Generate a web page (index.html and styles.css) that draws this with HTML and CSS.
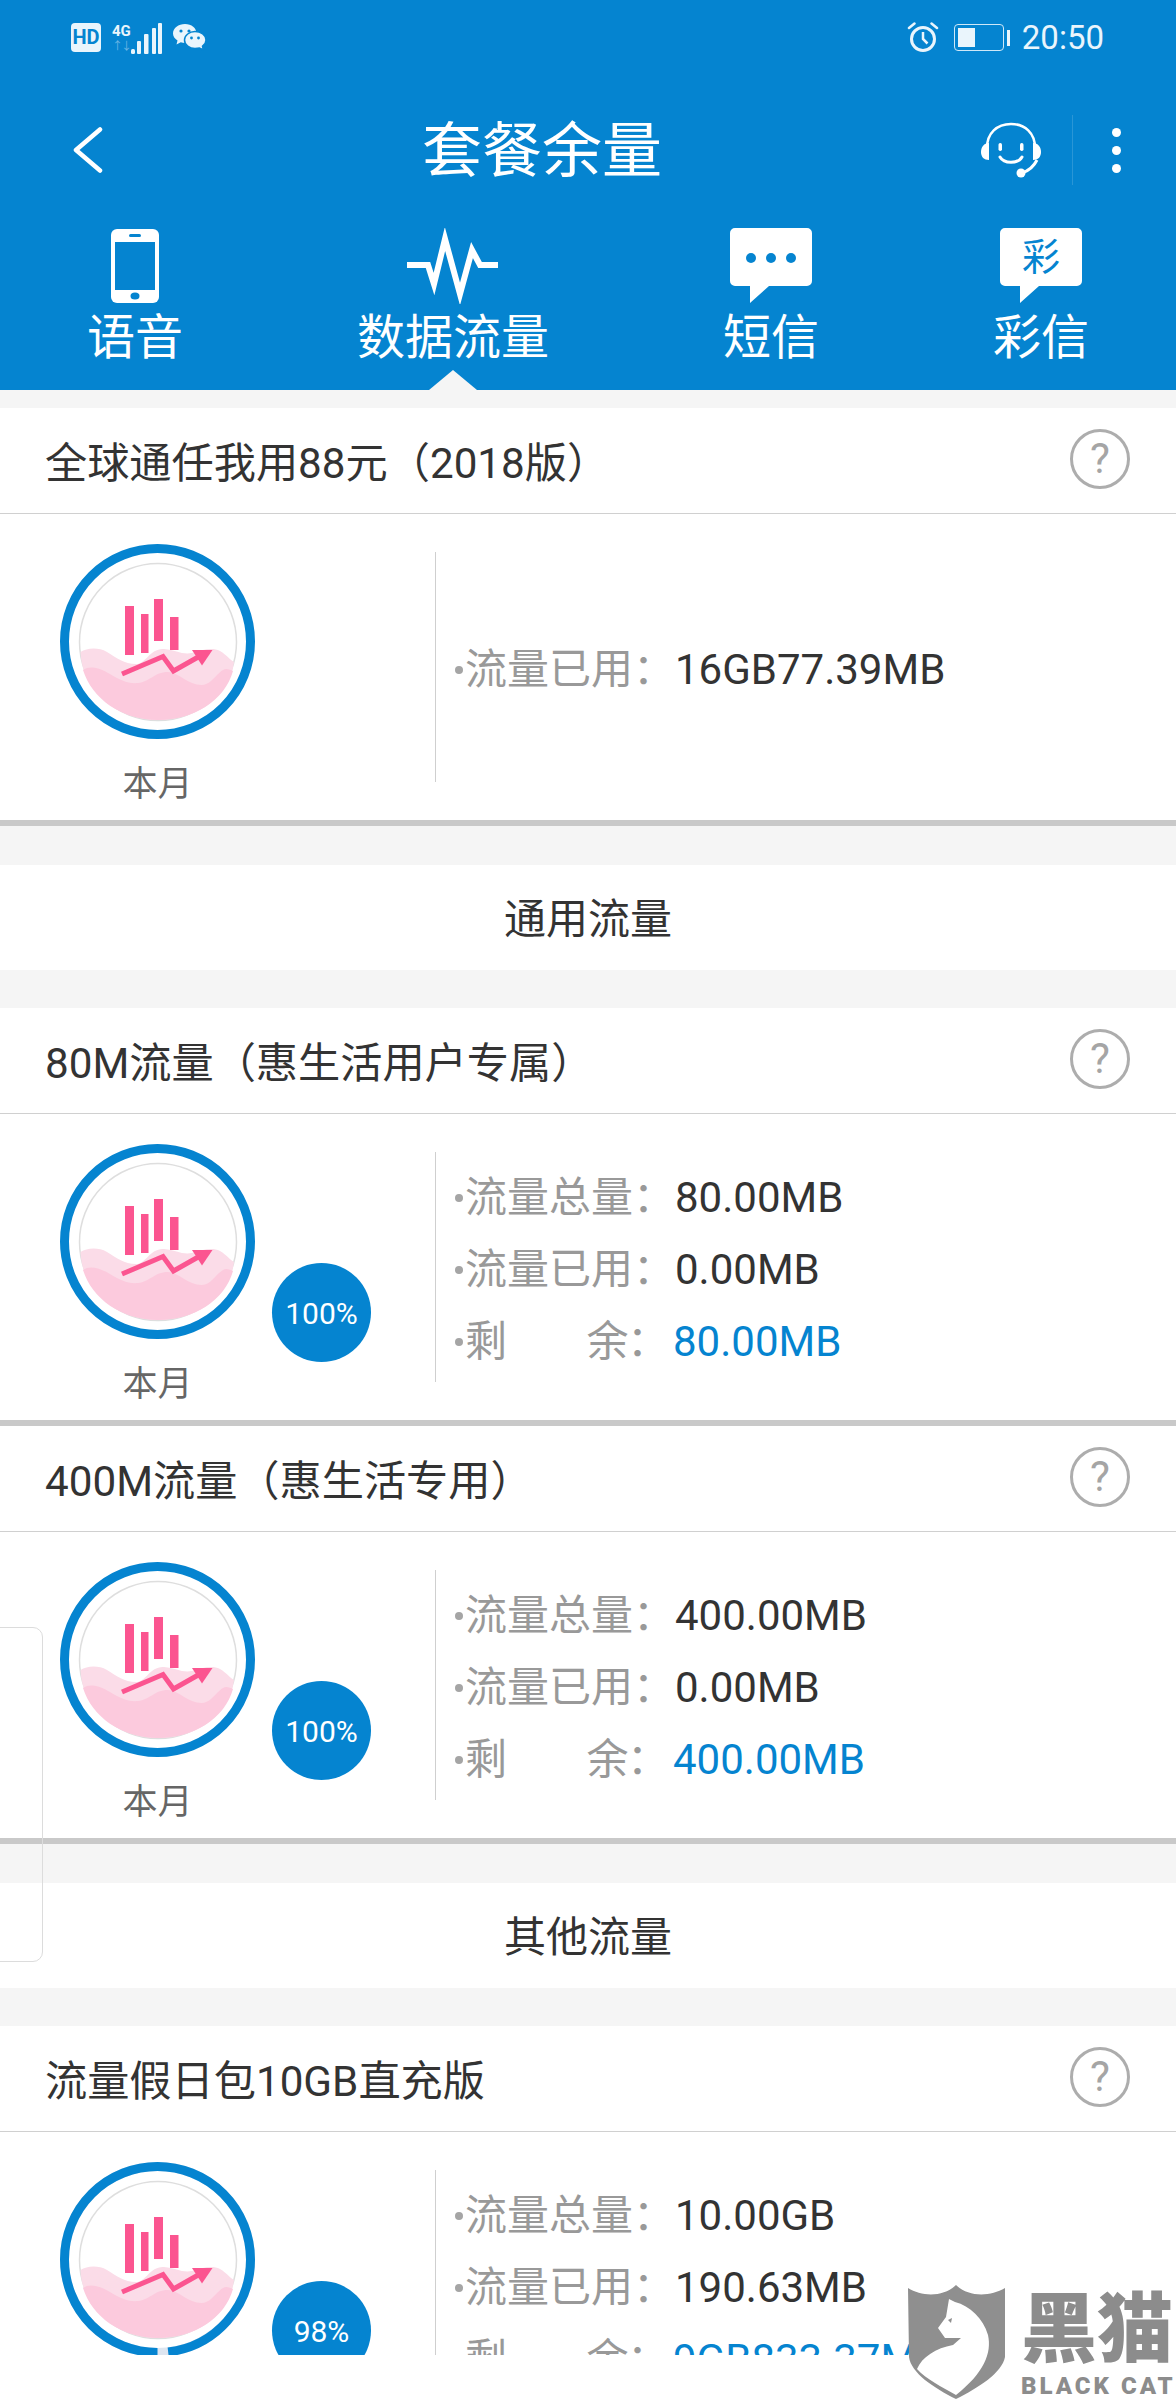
FILE: index.html
```html
<!DOCTYPE html>
<html lang="zh-CN">
<head>
    <meta charset="UTF-8">
    <meta name="viewport" content="width=device-width, initial-scale=1.0">
    <title>套餐余量</title>
    <link rel="stylesheet" href="styles.css">
</head>
<body>
    <!-- Shared gauge picture -->
    <svg class="defs" width="0" height="0">
        <symbol id="gaugeArt" viewBox="0 0 195 195">
            <circle cx="98" cy="98" r="78.5" fill="#fff" stroke="#dedede" stroke-width="1.5"/>
            <path d="M20.5 108C27 104 38 103 47 108C57 114 64 120 76 120C86 120 90 104 104 105C116 106 122 111 132 109C142 106 152 103 160 107C167 111 170 116 174 118C170 152 138 176 98 176C58 176 22 148 20.5 108Z" fill="#fbdce8"/>
            <path d="M23 126C30 121 40 124 50 130C60 136 68 140 78 139C90 138 94 128 108 128C118 128 128 141 142 141C152 141 158 126 166 125C169 125 171 126 173 127C165 156 134 176 98 176C62 176 32 155 23 126Z" fill="#fccadd"/>
            <rect x="65" y="62" width="9" height="49" fill="#fb5590"/>
            <rect x="81" y="70" width="7.5" height="39" fill="#fb5590"/>
            <rect x="94" y="55" width="9" height="42" fill="#fb5590"/>
            <rect x="110" y="73" width="8.5" height="33" fill="#fb5590"/>
            <path d="M62 130L103 112.500L113.500 127L140 112" fill="none" stroke="#fb5590" stroke-width="5"/>
            <path d="M132 106H152.500L142 121.500Z" fill="#fb5590"/>
        </symbol>
    </svg>

    <header class="top">
        <div class="status">
            <div class="status-left">
                <span class="hd">HD</span>
                <span class="net">
                    <span class="net-g">4G</span>
                    <span class="net-arrows">↑↓</span>
                </span>
                <svg class="signal" width="32" height="32" viewBox="0 0 32 32">
                    <g fill="#eaf5fc">
                        <rect x="0" y="26" width="4" height="5" rx="1.500"/>
                        <rect x="6" y="18" width="4" height="13" rx="1"/>
                        <rect x="13" y="11" width="4.500" height="20" rx="1"/>
                        <rect x="21" y="5" width="4" height="26" rx="1"/>
                        <rect x="27" y="0" width="4" height="31" rx="1"/>
                    </g>
                </svg>
                <svg class="wechat" width="33" height="27" viewBox="0 0 33 27">
                    <path d="M12 0C18.500 0 23.500 4 23.500 9.500C23.500 15 18.500 19 12 19C10.500 19 9 18.800 7.800 18.300L3.500 20.500L4.500 16.500C1.800 14.800 0 12.300 0 9.500C0 4 5.500 0 12 0Z" fill="#eaf5fc"/>
                    <circle cx="8" cy="7" r="1.600" fill="#0584d0"/>
                    <circle cx="16" cy="7" r="1.600" fill="#0584d0"/>
                    <path d="M22 7.500C28 7.500 33 11.300 33 16C33 18.500 31.500 20.800 29.500 22.200L30.500 26L26.500 24C25.300 24.300 23.800 24.500 22 24.500C16.500 24.500 11.500 21 11.500 16C11.500 11.300 16.500 7.500 22 7.500Z" fill="#eaf5fc" stroke="#0584d0" stroke-width="1.500"/>
                    <circle cx="18.500" cy="14" r="1.400" fill="#0584d0"/>
                    <circle cx="25.500" cy="14" r="1.400" fill="#0584d0"/>
                </svg>
            </div>
            <div class="status-right">
                <svg class="alarm" width="32" height="31" viewBox="0 0 32 31">
                    <circle cx="16" cy="17" r="11.500" fill="none" stroke="#eaf5fc" stroke-width="3"/>
                    <path d="M16 10V17L20.500 21.500" fill="none" stroke="#eaf5fc" stroke-width="2.500"/>
                    <path d="M2 6L7.500 1.500M30 6L24.500 1.500" stroke="#eaf5fc" stroke-width="2.500" stroke-linecap="round"/>
                </svg>
                <span class="battery"><span class="battery-fill"></span></span>
                <span class="battery-nub"></span>
                <span class="clock">20:50</span>
            </div>
        </div>

        <nav class="navbar">
            <svg class="back" width="30" height="46" viewBox="0 0 30 46">
                <path d="M27 2.500L3 23L27 43.500" fill="none" stroke="#fff" stroke-width="4.500" stroke-linecap="round" stroke-linejoin="round"/>
            </svg>
            <h1 class="page-title">套餐余量</h1>
            <div class="nav-actions">
                <svg class="headset" width="62" height="56" viewBox="0 0 62 56">
                    <path d="M7 26C7 11 17 2 31 2C45 2 55 11 55 26" fill="none" stroke="#fff" stroke-width="2.500"/>
                    <path d="M9 21C4 21 1 25 1 30C1 35 4 38 9 38Z" fill="#fff"/>
                    <path d="M53 21C58 21 61 25 61 30C61 35 58 38 53 38Z" fill="#fff"/>
                    <path d="M57 38C54 44 48 49 42 51" fill="none" stroke="#fff" stroke-width="3"/>
                    <circle cx="41" cy="51" r="4.500" fill="#fff"/>
                    <rect x="18.500" y="21" width="3.500" height="8" rx="1.700" fill="#fff"/>
                    <rect x="40" y="21" width="3.500" height="8" rx="1.700" fill="#fff"/>
                    <path d="M20 35C24 42 38 42 42 35" fill="none" stroke="#fff" stroke-width="3" stroke-linecap="round"/>
                </svg>
                <span class="nav-sep"></span>
                <span class="more"><i></i><i></i><i></i></span>
            </div>
        </nav>

        <div class="tabs">
            <div class="tab">
                <svg width="48" height="74" viewBox="0 0 48 74">
                    <rect x="0" y="0" width="48" height="74" rx="6" fill="#fff"/>
                    <rect x="4" y="13" width="40" height="48" fill="#0584d0"/>
                    <rect x="18" y="5" width="12" height="3" rx="1.500" fill="#0584d0"/>
                    <ellipse cx="24" cy="67" rx="4.500" ry="3.500" fill="#0584d0"/>
                </svg>
                <span>语音</span>
            </div>
            <div class="tab tab-active">
                <svg width="92" height="76" viewBox="0 0 92 76">
                    <path d="M0 37H21L27 56L38 11L53 66L65 22L73 37H91" fill="none" stroke="#fff" stroke-width="6" stroke-miterlimit="8"/>
                </svg>
                <span>数据流量</span>
            </div>
            <div class="tab">
                <svg width="82" height="76" viewBox="0 0 82 76">
                    <path d="M5 0H77A5 5 0 0 1 82 5V53A5 5 0 0 1 77 58H39L20 75V58H5A5 5 0 0 1 0 53V5A5 5 0 0 1 5 0Z" fill="#fff"/>
                    <circle cx="21" cy="30" r="5" fill="#0584d0"/>
                    <circle cx="41" cy="30" r="5" fill="#0584d0"/>
                    <circle cx="61" cy="30" r="5" fill="#0584d0"/>
                </svg>
                <span>短信</span>
            </div>
            <div class="tab">
                <span class="bubble">
                    <svg width="82" height="76" viewBox="0 0 82 76">
                        <path d="M5 0H77A5 5 0 0 1 82 5V53A5 5 0 0 1 77 58H39L20 75V58H5A5 5 0 0 1 0 53V5A5 5 0 0 1 5 0Z" fill="#fff"/>
                    </svg>
                    <b class="bubble-text">彩</b>
                </span>
                <span>彩信</span>
            </div>
        </div>
    </header>

    <main class="content">
        <section class="card">
            <div class="card-title">
                <h2>全球通任我用88元（2018版）</h2>
                <span class="help">?</span>
            </div>
            <div class="card-body">
                <div class="gauge">
                    <svg width="195" height="195" viewBox="0 0 195 195">
                        <circle class="ring" cx="97.500" cy="97.500" r="93"/>
                        <use href="#gaugeArt"/>
                    </svg>
                    <p class="gauge-label">本月</p>
                </div>
                <ul class="info">
                    <li><span class="key">流量已用：</span><span class="val">16GB77.39MB</span></li>
                </ul>
            </div>
        </section>

        <div class="section-head">通用流量</div>

        <section class="card">
            <div class="card-title">
                <h2>80M流量（惠生活用户专属）</h2>
                <span class="help">?</span>
            </div>
            <div class="card-body">
                <div class="gauge">
                    <svg width="195" height="195" viewBox="0 0 195 195">
                        <circle class="ring" cx="97.500" cy="97.500" r="93"/>
                        <use href="#gaugeArt"/>
                    </svg>
                    <p class="gauge-label">本月</p>
                    <span class="badge">100%</span>
                </div>
                <ul class="info">
                    <li><span class="key">流量总量：</span><span class="val">80.00MB</span></li>
                    <li><span class="key">流量已用：</span><span class="val">0.00MB</span></li>
                    <li><span class="key key-rest">剩　　余：</span><span class="val val-rest">80.00MB</span></li>
                </ul>
            </div>
        </section>

        <section class="card">
            <div class="card-title">
                <h2>400M流量（惠生活专用）</h2>
                <span class="help">?</span>
            </div>
            <div class="card-body">
                <div class="gauge">
                    <svg width="195" height="195" viewBox="0 0 195 195">
                        <circle class="ring" cx="97.500" cy="97.500" r="93"/>
                        <use href="#gaugeArt"/>
                    </svg>
                    <p class="gauge-label">本月</p>
                    <span class="badge">100%</span>
                </div>
                <ul class="info">
                    <li><span class="key">流量总量：</span><span class="val">400.00MB</span></li>
                    <li><span class="key">流量已用：</span><span class="val">0.00MB</span></li>
                    <li><span class="key key-rest">剩　　余：</span><span class="val val-rest">400.00MB</span></li>
                </ul>
            </div>
        </section>

        <div class="section-head">其他流量</div>

        <section class="card">
            <div class="card-title">
                <h2>流量假日包10GB直充版</h2>
                <span class="help">?</span>
            </div>
            <div class="card-body">
                <div class="gauge">
                    <svg width="195" height="195" viewBox="0 0 195 195">
                        <circle class="ring-track" cx="97.500" cy="97.500" r="93"/>
                        <circle class="ring" cx="97.500" cy="97.500" r="93" stroke-dasharray="572.600 584.300" transform="rotate(90 97.500 97.500)"/>
                        <use href="#gaugeArt"/>
                    </svg>
                    <p class="gauge-label">本月</p>
                    <span class="badge">98%</span>
                </div>
                <ul class="info">
                    <li><span class="key">流量总量：</span><span class="val">10.00GB</span></li>
                    <li><span class="key">流量已用：</span><span class="val">190.63MB</span></li>
                    <li><span class="key key-rest">剩　　余：</span><span class="val val-rest">9GB833.37MB</span></li>
                </ul>
            </div>
        </section>
    </main>

    <!-- Floating panel peeking in from the left edge -->
    <div class="side-panel"></div>

    <!-- Watermark -->
    <div class="watermark">
        <svg width="97" height="114" viewBox="0 0 97 114">
            <path d="M0 3C14 12 36 12 48 0C60 12 82 12 97 3V72C94 88 70 103 48 114C26 103 3 88 1 72Z" fill="#8f8f8f"/>
            <path d="M41 14L47 17C62 21 75 33 80 50C84 68 76 88 48 110C34 102 18 94 9 84C14 72 28 63 45 60L53 53L37 53L30 43L38 32Z" fill="#fff"/>
            <path d="M40 35L44 33L43 38Z" fill="#8f8f8f"/>
        </svg>
        <div class="wm-text">
            <strong>黑猫</strong>
            <span>BLACK CAT</span>
        </div>
    </div>
</body>
</html>
```

FILE: styles.css
```css
/* General Styling */
* {
    box-sizing: border-box;
}

body {
    position: relative;
    margin: 0;
    height: 2400px;
    overflow: hidden;
    background-color: #fff;
    font-family: Roboto, "Noto Sans CJK SC", sans-serif;
    color: #333;
}

h1, h2, p, ul {
    margin: 0;
    padding: 0;
}

svg {
    display: block;
}

.defs {
    position: absolute;
}

/* Blue header */
.top {
    height: 390px;
    background-color: #0584d0;
    color: #fff;
}

.status {
    display: flex;
    justify-content: space-between;
    align-items: center;
    height: 75px;
    padding: 0 72px 0 71px;
}

.status-left,
.status-right {
    display: flex;
    align-items: center;
}

.hd {
    width: 30px;
    height: 29px;
    border-radius: 4px;
    background-color: #eaf5fc;
    color: #0584d0;
    font-size: 20px;
    font-weight: 700;
    line-height: 29px;
    text-align: center;
}

.net {
    display: flex;
    flex-direction: column;
    width: 18px;
    margin-left: 11px;
}

.net-g {
    font-size: 15px;
    font-weight: 700;
    line-height: 16px;
    color: #eaf5fc;
}

.net-arrows {
    margin-top: 2px;
    font-size: 11px;
    line-height: 12px;
    color: #6bb4e4;
    letter-spacing: -2px;
}

.signal {
    margin: 0 0 -3px 1px;
}

.wechat {
    margin-left: 10px;
}

.battery {
    display: block;
    width: 50px;
    height: 27px;
    margin-left: 15px;
    padding: 3px;
    border: 1.5px solid #cfe8f8;
    border-radius: 4px;
}

.battery-fill {
    display: block;
    width: 17px;
    height: 100%;
    background-color: #eaf5fc;
}

.battery-nub {
    width: 3px;
    height: 16px;
    margin-left: 3px;
    background-color: #eaf5fc;
}

.clock {
    margin-left: 12px;
    font-size: 33px;
    color: #eaf5fc;
}

.navbar {
    display: flex;
    align-items: center;
    height: 150px;
    padding: 0 55px 0 73px;
}

.page-title {
    margin: 3px 0 0 319px;
    font-size: 60px;
    font-weight: 400;
    line-height: 1;
}

.nav-actions {
    display: flex;
    align-items: center;
    margin-left: auto;
}

.nav-sep {
    width: 1px;
    height: 70px;
    margin-left: 30px;
    background-color: #2a96d6;
}

.more {
    display: flex;
    flex-direction: column;
    gap: 9px;
    margin-left: 39px;
}

.more i {
    display: block;
    width: 9px;
    height: 9px;
    border-radius: 50%;
    background-color: #fff;
}

/* Tabs */
.tabs {
    display: flex;
    height: 165px;
    padding-top: 3px;
}

.tab {
    position: relative;
    display: flex;
    flex: 1 1 auto;
    flex-direction: column;
    align-items: center;
    font-size: 48px;
    line-height: 60px;
}

.tab svg {
    height: 76px;
    margin-bottom: 4px;
}

.tab-active::after {
    content: "";
    position: absolute;
    left: 50%;
    bottom: 0;
    margin-left: -24px;
    border-left: 24px solid transparent;
    border-right: 24px solid transparent;
    border-bottom: 20px solid #f5f5f5;
}

.bubble {
    position: relative;
    display: block;
}

.bubble-text {
    position: absolute;
    left: 0;
    top: 4px;
    width: 82px;
    color: #0584d0;
    font-size: 38px;
    font-weight: 400;
    line-height: 50px;
    text-align: center;
}

/* Content */
.content {
    height: 1965px;
    overflow: hidden;
    padding-top: 18px;
    background-color: #f5f5f5;
}

.card {
    background-color: #fff;
    border-bottom: 6px solid #c9c9c9;
}

.card-title {
    display: flex;
    justify-content: space-between;
    align-items: center;
    height: 106px;
    padding: 0 46px 3px 45px;
    border-bottom: 1px solid #d0d0d0;
}

.card-title h2 {
    font-size: 42.200px;
    font-weight: 400;
}

.help {
    width: 60px;
    height: 60px;
    border: 3px solid #adadad;
    border-radius: 50%;
    color: #a5a5a5;
    font-size: 42px;
    line-height: 54px;
    text-align: center;
}

.card-body {
    display: flex;
    height: 306px;
    padding: 30px 0 0 60px;
}

.gauge {
    position: relative;
    width: 195px;
}

.ring {
    fill: none;
    stroke: #0584d0;
    stroke-width: 9;
}

.ring-track {
    fill: none;
    stroke: #dde5f0;
    stroke-width: 9;
}

.gauge-label {
    margin-top: 21px;
    color: #666;
    font-size: 35px;
    line-height: 50px;
    text-align: center;
}

.badge {
    position: absolute;
    left: 212px;
    top: 119px;
    width: 99px;
    height: 99px;
    border-radius: 50%;
    background-color: #0584d0;
    color: #fff;
    font-size: 30px;
    line-height: 101px;
    text-align: center;
}

.info {
    display: flex;
    flex-direction: column;
    justify-content: center;
    height: 230px;
    margin: 8px 0 0 180px;
    padding: 5px 0 0 19px;
    border-left: 1px solid #cfcfcf;
    list-style: none;
    font-size: 42px;
    line-height: 72px;
}

.info li {
    display: flex;
    align-items: center;
    white-space: nowrap;
}

.info li::before {
    content: "";
    width: 8px;
    height: 8px;
    margin-right: 2px;
    border-radius: 50%;
    background-color: #a5a5a5;
}

.key {
    color: #999;
    width: 210px;
}

.key-rest {
    width: 208px;
    letter-spacing: -1.500px;
}

.val-rest {
    color: #0584d0;
}

.section-head {
    height: 105px;
    margin: 39px 0 38px;
    background-color: #fff;
    font-size: 42px;
    line-height: 110px;
    text-align: center;
}

/* Overlays */
.side-panel {
    position: absolute;
    left: -12px;
    top: 1627px;
    width: 55px;
    height: 335px;
    border: 1px solid #dcdcdc;
    border-radius: 10px;
}

.watermark {
    position: absolute;
    left: 908px;
    top: 2285px;
    display: flex;
    gap: 16px;
}

.wm-text {
    display: flex;
    flex-direction: column;
    color: #8c8c8c;
}

.wm-text strong {
    margin-top: 12px;
    font-size: 76px;
    font-weight: 900;
    line-height: 66px;
    white-space: nowrap;
}

.wm-text span {
    margin-top: 10px;
    font-size: 24px;
    font-weight: 900;
    line-height: 26px;
    letter-spacing: 3px;
    white-space: nowrap;
}
```
